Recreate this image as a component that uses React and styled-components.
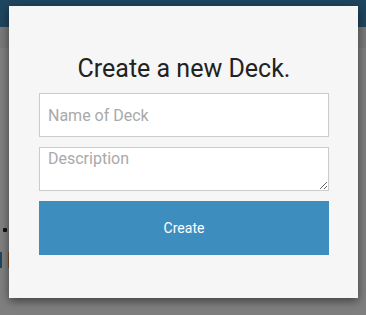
import React from "react";
import styled, { createGlobalStyle } from "styled-components";

const Global = createGlobalStyle`
  html, body { margin: 0; padding: 0; }
  body { font-family: Roboto, "Noto Sans", sans-serif; background: #fff; }
  #root { width: 366px; height: 315px; position: relative; overflow: hidden; }
`;

const Page = styled.div`
  width: 366px;
  height: 315px;
  display: flex;
  flex-direction: column;
  background: #ffffff;
`;

const Header = styled.div`
  height: 27px;
  background: #3e8cbe;
`;

const SubBar = styled.div`
  height: 21px;
  background: #f3f3f3;
`;

const Content = styled.div`
  flex: 1;
  display: flex;
  flex-direction: column;
`;

const Dot = styled.span`
  display: block;
  width: 4px;
  height: 4px;
  margin: 180px 0 0 3px;
  background: #222;
  border-radius: 1px;
`;

const ButtonRow = styled.div`
  display: flex;
  gap: 6px;
  margin-top: 20px;
`;

const Pill = styled.span`
  display: block;
  width: 2px;
  height: 16px;
  background: ${(p) => p.$color};
`;

const Overlay = styled.div`
  position: absolute;
  inset: 0;
  background: rgba(0, 0, 0, 0.5);
`;

const Modal = styled.div`
  position: absolute;
  left: 9px;
  top: 6px;
  width: 349px;
  height: 292px;
  box-sizing: border-box;
  background: #f6f6f6;
  box-shadow: 0 3px 9px rgba(0, 0, 0, 0.5);
  padding: 48px 29px 0 30px;
  display: flex;
  flex-direction: column;
  gap: 10px;
`;

const Title = styled.h2`
  margin: 0 0 -1px;
  font-family: Roboto, sans-serif;
  font-weight: 400;
  font-size: 25px;
  line-height: 30px;
  color: #222;
  text-align: center;
`;

const Field = styled.input`
  box-sizing: border-box;
  width: 100%;
  height: 44px;
  border: 1px solid #cccccc;
  background: #fff;
  padding: 0 8px;
  font-family: Roboto, sans-serif;
  font-size: 16px;
  color: #333;
  outline: none;
  &::placeholder { color: #a9a9a9; }
`;

const Area = styled.textarea`
  box-sizing: border-box;
  width: 100%;
  height: 44px;
  border: 1px solid #cccccc;
  background: #fff;
  padding: 1px 8px;
  font-family: Roboto, sans-serif;
  font-size: 16px;
  line-height: 19px;
  color: #333;
  outline: none;
  resize: vertical;
  &::placeholder { color: #a9a9a9; }
`;

const Submit = styled.button`
  height: 54px;
  width: 100%;
  border: none;
  background: #3e8dbf;
  color: #fff;
  font-family: Roboto, sans-serif;
  font-size: 14px;
  cursor: pointer;
`;

export default function App() {
  return (
    <>
      <Global />
      <Page>
        <Header />
        <SubBar />
        <Content>
          <Dot />
          <ButtonRow>
            <Pill $color="#3e8dbf" />
            <Pill $color="#f0ad4e" />
          </ButtonRow>
        </Content>
      </Page>
      <Overlay />
      <Modal>
        <Title>Create a new Deck.</Title>
        <Field placeholder="Name of Deck" />
        <Area placeholder="Description" />
        <Submit>Create</Submit>
      </Modal>
    </>
  );
}
